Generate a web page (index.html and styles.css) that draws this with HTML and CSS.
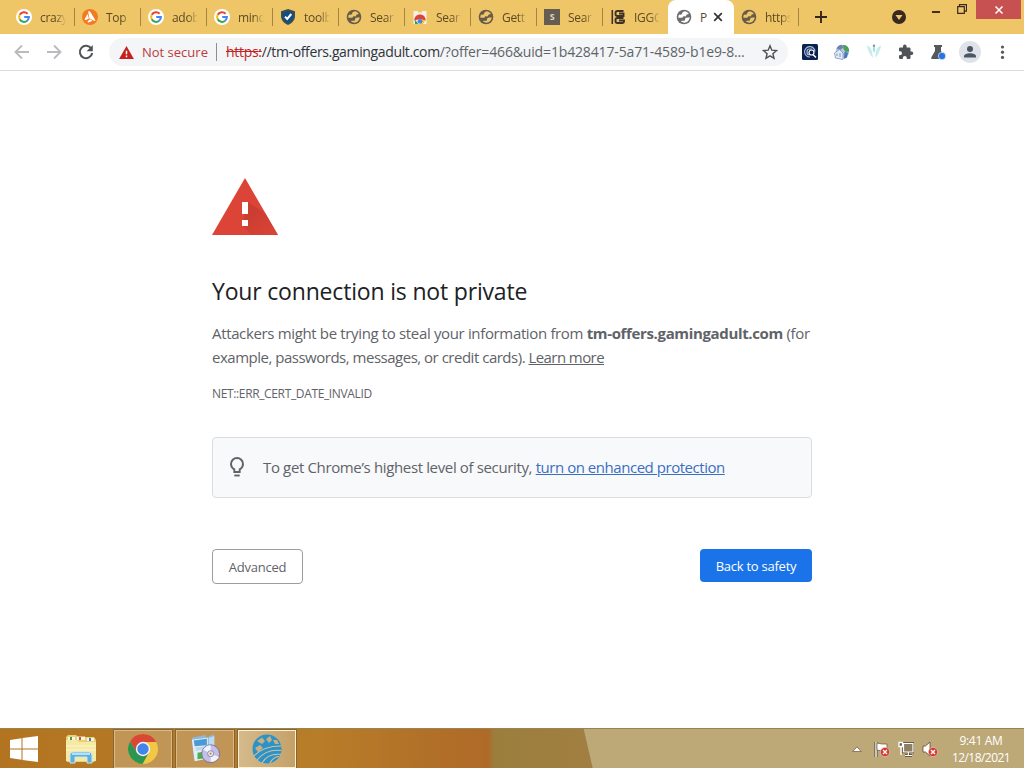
FILE: index.html
```
<!DOCTYPE html>
<html lang="en">
<head>
    <meta charset="UTF-8">
    <meta name="viewport" content="width=device-width, initial-scale=1.0">
    <title>Privacy error</title>
    <link rel="stylesheet" href="styles.css">
</head>
<body>

    <!-- Shared icons -->
    <svg class="sprite" width="0" height="0">
        <symbol id="google" viewBox="0 0 16 16">
            <circle cx="8" cy="8" r="8" fill="#fff"/>
            <g fill="none" stroke-width="2">
                <path d="M11.6 4.7A4.9 4.9 0 0 0 3.7 5.8" stroke="#ea4335"/>
                <path d="M3.7 5.8A4.9 4.9 0 0 0 3.7 10.3" stroke="#fbbc05"/>
                <path d="M3.7 10.3A4.9 4.9 0 0 0 11.2 11.7" stroke="#34a853"/>
                <path d="M11.2 11.7A4.7 4.7 0 0 0 12.9 8H8.2" stroke="#4285f4"/>
            </g>
        </symbol>
        <symbol id="globe" viewBox="0 0 16 16">
            <circle cx="8" cy="8" r="7.3" fill="currentColor"/>
            <path d="M8.600 2.300c1.700.1 3.200 1 4.200 2.400-.6.900-1.700.4-2.300 1.100-.5.600-.2 1.300-1 1.600-.8.300-1.500-.3-2.200 0-.7.300-.5 1.200-1.400 1.400H2.300C2.200 7.500 2.500 6.400 3 5.500c1 .3 2 .5 2.700-.2.800-.7.300-1.400 1-2 .5-.5 1.300-.5 1.900-1z" fill="var(--land)"/>
            <path d="M13.700 8.200c-.1 2.900-2.400 5.300-5.300 5.500-1.300 0-2.400-.4-3.400-1.100.3-.8 1.200-.7 2-.8.900-.1 1.800 0 2-.9.100-.8-.1-1.500.7-2 .9-.6 2.700-.3 4-.7z" fill="var(--land)"/>
        </symbol>
        <symbol id="badge" viewBox="0 0 10 10">
            <circle cx="5" cy="5" r="4.600" fill="#cf3a35" stroke="#f3c9bd" stroke-width=".6"/>
            <path d="M3 3l4 4M7 3l-4 4" stroke="#fff" stroke-width="1.400"/>
        </symbol>
    </svg>

    <!-- Tab strip -->
    <header class="tabstrip">
        <div class="tab"><svg class="favicon"><use href="#google"/></svg><span>crazy</span></div>
        <div class="tab">
            <svg class="favicon" viewBox="0 0 16 16"><circle cx="8" cy="8" r="8" fill="#f47a1f"/><path d="M6 2.600c1-.8 2.100-.2 2.600.6l4.600 7.700c.3.900-.4 1.300-1.100.9L7.500 9.500z" fill="#fff"/><path d="M5.500 5L7 9.500 3.800 11c-1 .4-1.300-.5-.9-1.200zM8 10.200l2.600 1.600-4 1.600c-.9.200-1.300-.6-.6-1.300z" fill="#fff"/></svg>
            <span>Top</span>
        </div>
        <div class="tab"><svg class="favicon"><use href="#google"/></svg><span>adob</span></div>
        <div class="tab"><svg class="favicon"><use href="#google"/></svg><span>mind</span></div>
        <div class="tab">
            <svg class="favicon" viewBox="0 0 16 16"><path d="M8 0l7 2.300V7c0 4.300-3 7.400-7 9-4-1.600-7-4.700-7-9V2.300z" fill="#44503f"/><path d="M8 1.700l5.500 1.800V7c0 3.400-2.300 5.900-5.500 7.300C4.800 12.900 2.500 10.400 2.500 7V3.500z" fill="#104e83"/><path d="M5 7.600l2.200 2.300L11.300 5" stroke="#fff" stroke-width="2" fill="none"/></svg>
            <span>toolb</span>
        </div>
        <div class="tab"><svg class="favicon"><use href="#globe"/></svg><span>Sear</span></div>
        <div class="tab">
            <svg class="favicon" viewBox="0 0 16 16"><path d="M1.500 2h4l1 1.500h3l1-1.500h4v13h-13z" fill="#f6efe6"/><path d="M2.300 11.500C2.300 3.500 13.700 3.500 13.700 11.500L8 10z" fill="#db4437"/><path d="M2.800 10.500L6.500 15H3z" fill="#2da562"/><path d="M13.500 11L11 15H8l1-4z" fill="#f6c33a"/><circle cx="8" cy="12.300" r="2.400" fill="#4a86dd"/></svg>
            <span>Sear</span>
        </div>
        <div class="tab"><svg class="favicon"><use href="#globe"/></svg><span>Gett</span></div>
        <div class="tab"><b class="favicon letter-icon">S</b><span>Sear</span></div>
        <div class="tab no-line">
            <svg class="favicon" viewBox="0 0 16 16"><path d="M2.300 1v14" stroke="#3c3029" stroke-width="1.600"/><path d="M13.500 2H7.500q-2 0-2 2v1q0 2 2 2h6V4.500H9M13.500 9h-6q-2 0-2 2v1q0 2 2 2h5q1.500 0 1.500-1.500v-1H9" fill="none" stroke="#3c3029" stroke-width="1.900"/></svg>
            <span>IGGG</span>
        </div>
        <div class="tab active">
            <svg class="favicon"><use href="#globe"/></svg><span>P</span>
            <svg class="tab-close" viewBox="0 0 10 10"><path d="M1.200 1.200l7.600 7.600M8.800 1.200L1.200 8.800" stroke="#333" stroke-width="1.700"/></svg>
        </div>
        <div class="tab last"><svg class="favicon"><use href="#globe"/></svg><span>https</span></div>
        <svg class="new-tab" viewBox="0 0 12 12"><path d="M6 0v12M0 6h12" stroke="#38251a" stroke-width="1.900"/></svg>
        <svg class="tab-search" viewBox="0 0 14 14"><circle cx="7" cy="7" r="7" fill="#38281f"/><path d="M3.500 5h7L7 10z" fill="#efc767"/></svg>
        <div class="window-buttons">
            <svg class="minimize" viewBox="0 0 8 2"><path d="M0 1h8" stroke="#4a2c12" stroke-width="2"/></svg>
            <svg class="restore" viewBox="0 0 10 10"><path d="M.7 2.700h6.600v6.600H.7zM2.500 2.500V.6h7v6.600H7.500" fill="none" stroke="#38281f" stroke-width="1.200"/></svg>
            <button class="close"><svg viewBox="0 0 8 8"><path d="M.5.5l7 7M7.500.5l-7 7" stroke="#fff" stroke-width="1.500"/></svg></button>
        </div>
    </header>

    <!-- Toolbar -->
    <nav class="toolbar">
        <svg class="nav-icon" viewBox="0 0 16 16"><path d="M15 8H2M8 1.500L1.500 8 8 14.500" stroke="#b9bbbe" stroke-width="1.900" fill="none"/></svg>
        <svg class="nav-icon" viewBox="0 0 16 16"><path d="M1 8h13M8 1.500L14.500 8 8 14.500" stroke="#b9bbbe" stroke-width="1.900" fill="none"/></svg>
        <svg class="nav-icon" viewBox="0 0 16 16"><path d="M13.300 4.600A6.200 6.200 0 1 0 14.200 9" stroke="#505458" stroke-width="2" fill="none"/><path d="M14.800 1v6.200H8.600z" fill="#505458"/></svg>
        <div class="omnibox">
            <svg class="warn" viewBox="0 0 16 14"><path d="M8 0l8 14H0z" fill="#c5221f"/><path d="M8 5v4M8 10.300v1.700" stroke="#fff" stroke-width="1.600"/></svg>
            <span class="not-secure">Not secure</span>
            <span class="url"><s>https</s><span class="host"><s>:</s>//tm-offers.gamingadult.com</span>/?offer=466&amp;uid=1b428417-5a71-4589-b1e9-8...</span>
            <svg class="star" viewBox="0 0 16 16"><path d="M8 1.800l1.800 4.400 4.700.4-3.600 3.100 1.100 4.600L8 11.800l-4 2.500 1.100-4.600-3.600-3.100 4.700-.4z" fill="none" stroke="#4d5156" stroke-width="1.400"/></svg>
        </div>
        <div class="extensions">
            <svg viewBox="0 0 16 16"><rect width="16" height="16" rx="1.500" fill="#0b2150"/><path d="M13 7.500A5.200 5.200 0 1 0 8 13M10 5H7.500Q5 5 5 8t2.500 3" fill="none" stroke="#a8bee0" stroke-width="1.200"/><circle cx="9.500" cy="8.500" r="2.500" fill="none" stroke="#fff" stroke-width="1.200"/><path d="M11 10.500l3 3" stroke="#fff" stroke-width="1.500"/></svg>
            <svg viewBox="0 0 16 16"><circle cx="8.500" cy="7.500" r="6.800" fill="#b5c6e2"/><path d="M9 1c4-.5 6.500 3 6 6.500l-3.500.5-2-3z" fill="#4c9e58"/><path d="M2.500 4.500Q4 1 8 .8l1.500 2.700L6 6z" fill="#6a83b5"/><path d="M.5 9l5-3.500L9 9v6.500L1.500 14z" fill="#e3edf7" stroke="#7892bd" stroke-width=".8"/><path d="M3 12V9.500M6 13V9" stroke="#7892bd"/><path d="M10.500 8l3.500.5-1 5-3 1.500z" fill="#4876b9"/></svg>
            <svg viewBox="0 0 16 16"><path d="M.8 1.500q4.200 1 5 5.500l1.200 7Q2.500 9.500.8 1.500zM15.200 1.500q-4.200 1-5 5.500L9 14q4.500-4.500 6.200-12.500z" fill="#c5eeee"/><path d="M8 2q2.500 2.500 0 7-2.500-4.500 0-7z" fill="#addfe3"/><circle cx="8" cy="1.700" r="1.200" fill="#7198a7"/></svg>
            <svg viewBox="0 0 16 16"><path d="M13.500 7.500h-1V4.700q0-1.300-1.300-1.300H8.600v-1a1.800 1.800 0 0 0-3.600 0v1H2.300Q1 3.400 1 4.700v2.500h1a2 2 0 0 1 0 4H1v2.500Q1 15 2.300 15h2.500v-1a2 2 0 0 1 4 0v1h2.400q1.300 0 1.300-1.300v-2.600h1a1.800 1.800 0 0 0 0-3.600z" fill="#505458"/></svg>
            <svg viewBox="0 0 16 16"><path d="M4 1h8v2h-1v4l3.500 6q1 2-1 2h-11q-2 0-1-2L5 7V3H4z" fill="#55585c"/><circle cx="12" cy="12" r="3.700" fill="#2675e3" stroke="#fff" stroke-width=".6"/></svg>
            <svg class="avatar" viewBox="0 0 22 22"><circle cx="11" cy="11" r="11" fill="#dfe3e9"/><circle cx="11" cy="8" r="3" fill="#4b5662"/><path d="M5 16.500v-1.300c0-4 12-4 12 0v1.300z" fill="#4b5662"/></svg>
            <svg viewBox="0 0 16 16"><g fill="#55585c"><circle cx="8.500" cy="3" r="1.600"/><circle cx="8.500" cy="8.200" r="1.600"/><circle cx="8.500" cy="13.400" r="1.600"/></g></svg>
        </div>
    </nav>

    <!-- Warning page -->
    <main>
        <svg class="big-warning" viewBox="0 0 66 57">
            <defs><linearGradient id="shade" x1="0" y1="0" x2="1" y2="1"><stop offset=".3" stop-color="#c23a2e"/><stop offset="1" stop-color="#db4437"/></linearGradient></defs>
            <path d="M33 0l33 57H0z" fill="#db4437"/>
            <path d="M36 24l17.500 11.500L66 57H40L30 47z" fill="url(#shade)" opacity=".65"/>
            <path d="M30 24h6v12h-6zM30 42h6v6h-6z" fill="#fff"/>
        </svg>
        <h1>Your connection is not private</h1>
        <p class="message"><span class="line-one">Attackers might be trying to steal your information from <strong>tm-offers.gamingadult.com</strong> (for</span> <span class="line-two">example, passwords, messages, or credit cards). <a href="#">Learn more</a></span></p>
        <p class="error-code">NET::ERR_CERT_DATE_INVALID</p>
        <div class="promo">
            <svg viewBox="0 0 14 20"><path d="M4.300 15v-2.600Q1 10.500 1 7a6 6 0 0 1 12 0q0 3.500-3.300 5.400V15z" fill="none" stroke="#5f6368" stroke-width="1.900"/><path d="M4.300 18.500h5.400" stroke="#5f6368" stroke-width="1.900"/></svg>
            <span>To get Chrome’s highest level of security, <a href="#">turn on enhanced protection</a></span>
        </div>
        <div class="actions">
            <button class="advanced">Advanced</button>
            <button class="safety">Back to safety</button>
        </div>
    </main>

    <!-- Taskbar -->
    <footer class="taskbar">
        <svg class="start" viewBox="0 0 28 26"><path d="M0 4l11.500-1.700v10.200H0zM12.500 2.100L28 0v12.500H12.500zM0 13.500h11.500v10.200L0 22zM12.500 13.500H28V26l-15.500-2.100z" fill="#fff"/></svg>
        <svg class="explorer" viewBox="0 0 32 30">
            <path d="M1 3l2-2h8l2 2h16l2 3v20l-2 2H2l-1-2z" fill="#e9cf78"/>
            <path d="M3 3h7v3H3z" fill="#f8f6dd"/><path d="M5 3h2v3H5z" fill="#3f9a5c"/><path d="M12 2.500h8V6h-8z" fill="#f8f6dd"/><path d="M14 3h2v3h-2z" fill="#c7543b"/><path d="M22 4h7v3h-7z" fill="#f8f6dd"/><path d="M24 4h2v3h-2z" fill="#3f7fb8"/>
            <path d="M1 6h11l2 2h17v19H1z" fill="#f5e9a3"/><path d="M1 12h30M1 16h30" stroke="#fff5c7"/>
            <path d="M5 29V21q0-3 3-3h16q3 0 3 3v8h-5v-6H10v6z" fill="#5eb0dc" stroke="#c8e7f1"/><path d="M7 20h18" stroke="#d6f0f8" stroke-width="1.500"/>
        </svg>
        <div class="task">
            <svg viewBox="0 0 30 30"><circle cx="15" cy="15" r="15" fill="#f2c744"/><path d="M2 7.500a15 15 0 0 1 26.200.5H15L8.500 18z" fill="#d94837"/><path d="M2 7.500A15 15 0 0 0 14.500 30l6.500-11.500H9z" fill="#2c9651"/><circle cx="15" cy="15" r="7.200" fill="#f3f4f6"/><circle cx="15" cy="15" r="5.700" fill="#4384e8"/></svg>
        </div>
        <div class="task">
            <svg viewBox="0 0 32 32"><path d="M2 4l14-3 2 3 7-4 1 5-2 18-20 4z" fill="#8db9dc"/><path d="M2 6l17-2v22L5 29z" fill="#e5edf4"/><path d="M4 7l14-2v7L5 13z" fill="#4a9ad4"/><path d="M6 14l12-1v3L6 18z" fill="#b9d9ef"/><path d="M20 4l6-2v18l-6 3z" fill="#bcdcf0"/><path d="M8 20l6-1v7l-6 1z" fill="#4eaf4d"/><circle cx="22" cy="21" r="9.500" fill="#c4bfe4" stroke="#66618f" stroke-width=".8"/><path d="M22 21l-8-4.500q4-5 8-4.500zM22 21l9 3.500q-4 6-9 5z" fill="#f3f2ff"/><circle cx="22" cy="21" r="3.200" fill="#eee" stroke="#8a80ad"/><circle cx="22" cy="21" r="1.200" fill="#b7924b"/></svg>
        </div>
        <div class="task current">
            <svg viewBox="0 0 30 30"><circle cx="15" cy="15" r="14.500" fill="#2c93c8"/><path d="M5 7l5-3.500 3 3.500-3 3zM14 5l4-3 2 4-3 3zM3 14l5-3 3 3-5 4zM21 6l4 0 2 4-4 0z" fill="#c9b083"/><path d="M2 22Q11 12 29 12M5 26Q14 15 29 16.500M10 29Q16 19 29 20.500M18 29q3-6 9-6.500" fill="none" stroke="#d3c09c" stroke-width="1.100"/></svg>
        </div>
        <div class="tray">
            <svg class="arrow" viewBox="0 0 10 6"><path d="M.8 5.500L5 .8l4.200 4.700z" fill="#fff" stroke="#68543d" stroke-width=".7"/></svg>
            <svg viewBox="0 0 16 16"><path d="M2 1v15" stroke="#514331" stroke-width="3"/><path d="M2 1v15" stroke="#fff" stroke-width="1.400"/><path d="M3 2l5 1h5v7H8L3 9z" fill="#fff" stroke="#65513a" stroke-width=".7"/><use href="#badge" x="6" y="6" width="10" height="10"/></svg>
            <svg viewBox="0 0 16 16"><path d="M5.500 2.500h9.500v8.500H5.500zM10.300 11v3M7 14.500h7" fill="none" stroke="#514331" stroke-width="2.600"/><path d="M5.500 2.500h9.500v8.500H5.500zM10.300 11v3M7 14.500h7" fill="#8d7f63" stroke="#fff" stroke-width="1.200"/><path d="M1 1.500h3.500v4H1zM3 6v8" fill="#665a48" stroke="#fff" stroke-width="1.300"/></svg>
            <svg viewBox="0 0 16 16"><path d="M1 5h2.500L8 1v14l-4.500-4H1z" fill="#fff" stroke="#5c4a35" stroke-width=".8"/><use href="#badge" x="6" y="6" width="10" height="10"/></svg>
        </div>
        <div class="clock"><span>9:41 AM</span><span class="date">12/18/2021</span></div>
    </footer>

</body>
</html>
```
FILE: styles.css
```
/* General Styles */
* {
    box-sizing: border-box;
}

body {
    margin: 0;
    width: 1024px;
    height: 768px;
    overflow: hidden;
    display: flex;
    flex-direction: column;
    background: #fff;
    font-family: "Open Sans", "Noto Sans", sans-serif;
    color: #5f6368;
}

svg {
    display: block;
    flex: none;
}

button {
    font-family: inherit;
}

.sprite {
    position: absolute;
}

/* Tab Strip */
.tabstrip {
    height: 34px;
    flex: none;
    display: flex;
    padding-left: 8px;
    background: #eec668;
}

.tab {
    --land: #eec668;
    width: 66px;
    height: 34px;
    flex: none;
    display: flex;
    align-items: center;
    padding-left: 8px;
    font-size: 12px;
    letter-spacing: -0.3px;
    color: #5c4a26;
    border-image: none;
    background: linear-gradient(#a58443, #a58443) left 8px / 1px 18px no-repeat;
}

.tab:first-child,
.tab.last {
    background: none;
}

.tab span {
    width: 26px;
    margin-left: 8px;
    white-space: nowrap;
    -webkit-mask-image: linear-gradient(to right, #000 60%, transparent);
    mask-image: linear-gradient(to right, #000 60%, transparent);
}

.tab .favicon {
    width: 16px;
    height: 16px;
    flex: none;
    color: #665a49;
}

.tab .letter-icon {
    background: #665d52;
    color: #ded6c9;
    font-size: 9px;
    line-height: 16px;
    text-align: center;
}

.tab.active {
    --land: #fff;
    background: #fff;
    border-radius: 8px 8px 0 0;
}

.tab.active .favicon {
    color: #6d6d6d;
}

.tab.active span {
    width: 8px;
    -webkit-mask-image: none;
    mask-image: none;
}

.tab.last {
    width: 65px;
    padding-left: 7px;
    background: linear-gradient(#a58443, #a58443) right 8px / 1px 18px no-repeat;
}

.tab-close {
    width: 10px;
    height: 10px;
    margin-left: 5px;
}

.new-tab {
    width: 12px;
    height: 12px;
    margin: 11px 0 0 16px;
}

.tab-search {
    width: 14px;
    height: 14px;
    margin: 10px 0 0 65px;
}

.window-buttons {
    display: flex;
    margin-left: auto;
}

.minimize {
    width: 8px;
    height: 2px;
    margin: 11px 17px 0 0;
}

.restore {
    width: 10px;
    height: 10px;
    margin: 4px 9px 0 0;
}

.close {
    width: 45px;
    height: 19px;
    margin-right: 3px;
    padding: 0;
    border: 0;
    background: #c75050;
}

.close svg {
    width: 8px;
    height: 8px;
    margin: 0 auto;
}

/* Toolbar */
.toolbar {
    height: 37px;
    flex: none;
    display: flex;
    align-items: center;
    padding-left: 14px;
    border-bottom: 1px solid #dcdde0;
}

.nav-icon {
    width: 16px;
    height: 16px;
    margin-right: 16px;
}

.omnibox {
    width: 679px;
    height: 28px;
    margin-left: -1px;
    display: flex;
    align-items: center;
    padding: 0 10px;
    border-radius: 14px;
    background: #f3f5f7;
    font-size: 14px;
    line-height: 18px;
    white-space: nowrap;
}

.warn {
    width: 15px;
    height: 13px;
}

.not-secure {
    width: 75px;
    margin-left: 8px;
    padding-right: 7px;
    border-right: 1px solid #8b8e92;
    color: #bd3b3b;
    font-size: 13px;
}

.url {
    margin-left: 9px;
    letter-spacing: -0.15px;
}

.url s {
    color: #c5221f;
    letter-spacing: -0.3px;
}

.host {
    color: #303338;
    letter-spacing: -0.36px;
}

.star {
    width: 16px;
    height: 16px;
    margin-left: auto;
}

.extensions {
    display: flex;
    align-items: center;
    gap: 16px;
    margin-left: 14px;
}

.extensions svg {
    width: 16px;
    height: 16px;
}

.extensions .avatar {
    width: 22px;
    height: 22px;
    margin: 0 -3px;
}

/* Warning Page */
main {
    flex: 1;
    width: 600px;
    margin: 0 auto;
    padding-top: 107px;
}

.big-warning {
    width: 66px;
    height: 57px;
}

h1 {
    margin: 40px 0 0;
    color: #202124;
    font-size: 23px;
    font-weight: 400;
    letter-spacing: -0.18px;
    line-height: 32px;
    white-space: nowrap;
}

.message {
    margin: 14px 0 0;
    font-size: 15px;
    line-height: 24px;
    white-space: nowrap;
}

.message span {
    display: block;
}

.line-one {
    letter-spacing: -0.35px;
}

.line-two {
    letter-spacing: -0.49px;
}

.message a {
    color: inherit;
    letter-spacing: -0.58px;
}

.error-code {
    margin: 15px 0 0;
    font-size: 12px;
    letter-spacing: -0.36px;
    line-height: 20px;
}

.promo {
    height: 61px;
    margin-top: 33px;
    display: flex;
    align-items: center;
    padding: 0 0 1px 17px;
    border: 1px solid #dadce0;
    border-radius: 4px;
    background: #f8f9fb;
    font-size: 15px;
    letter-spacing: -0.36px;
    white-space: nowrap;
}

.promo svg {
    width: 14px;
    height: 20px;
    margin-right: 19px;
}

.promo a {
    color: #3a6fc4;
    letter-spacing: -0.46px;
}

.actions {
    margin-top: 51px;
    display: flex;
    justify-content: space-between;
    align-items: flex-start;
}

.actions button {
    padding: 0;
    border-radius: 4px;
    font-size: 13px;
    letter-spacing: -0.25px;
    white-space: nowrap;
}

.advanced {
    width: 91px;
    height: 35px;
    border: 1px solid #9a9da1;
    background: #fff;
    color: #5f6368;
}

.safety {
    width: 112px;
    height: 33px;
    border: 0;
    background: #1a73e8;
    color: #fff;
}

/* Taskbar */
.taskbar {
    height: 40px;
    flex: none;
    display: flex;
    align-items: center;
    padding-left: 10px;
    border-top: 1px solid #9a8254;
    background: linear-gradient(77deg, transparent 577px, #bda877 578px),
        linear-gradient(to right, #b27420 0, #b87d28 320px, #b17028 430px, #af6a28 488px, #9b7e3c 494px, #a17f42 590px);
}

.start {
    width: 28px;
    height: 26px;
}

.explorer {
    width: 32px;
    height: 30px;
    margin: 0 16px 0 27px;
}

.task {
    width: 58px;
    height: 38px;
    margin-left: 1px;
    display: flex;
    align-items: center;
    justify-content: center;
    border: 1px solid #dab982;
    outline: 1px solid #866436;
    background: #c09555;
}

.task + .task {
    margin-left: 4px;
}

.task svg {
    width: 30px;
    height: 30px;
}

.task.current {
    border-color: #fff0cc;
    background: linear-gradient(to right, #d4ba8c, #c5a168);
}

.tray {
    display: flex;
    align-items: center;
    gap: 8px;
    margin-left: auto;
}

.tray svg {
    width: 16px;
    height: 16px;
}

.tray .arrow {
    width: 10px;
    height: 6px;
    margin-right: 4px;
}

.clock {
    width: 60px;
    margin: 0 13px;
    display: flex;
    flex-direction: column;
    align-items: center;
    color: #fff;
    font-size: 12px;
    letter-spacing: -0.3px;
    line-height: 17px;
    white-space: nowrap;
}

.clock .date {
    letter-spacing: -0.55px;
}
```
